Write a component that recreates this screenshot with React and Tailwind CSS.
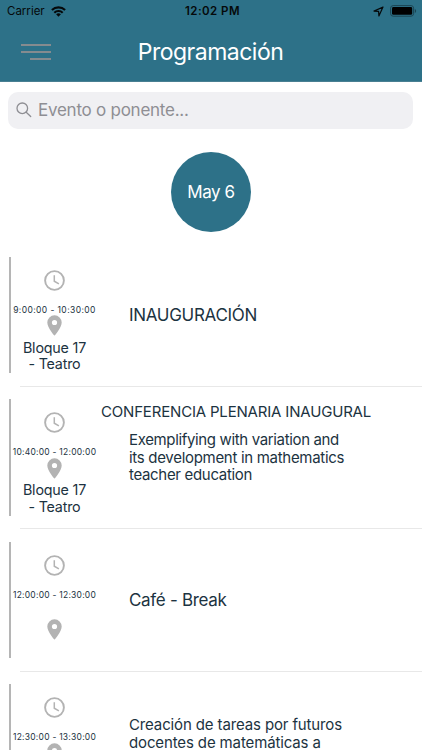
import React from "react";

const events = [
  { time: "9:00:00 - 10:30:00", timeClass: "tracking-[0.4px]", place: ["Bloque 17", "- Teatro"], title: "INAUGURACIÓN" },
  {
    time: "10:40:00 - 12:00:00",
    timeClass: "tracking-[0.24px]",
    place: ["Bloque 17", "- Teatro"],
    heading: "CONFERENCIA PLENARIA INAUGURAL",
    lines: [
      ["Exemplifying with variation and", "tracking-[-0.35px]"],
      ["its development in mathematics", "tracking-[-0.3px]"],
      ["teacher education", "tracking-[-0.32px]"],
    ],
  },
  { time: "12:00:00 - 12:30:00", timeClass: "tracking-[0.24px]", title: "Café - Break" },
  {
    time: "12:30:00 - 13:30:00",
    timeClass: "tracking-[0.24px]",
    alignTop: true,
    lines: [
      ["Creación de tareas por futuros", "tracking-[-0.13px]"],
      ["docentes de matemáticas a", "tracking-[-0.13px]"],
    ],
  },
];

function Clock() {
  return (
    <svg width="21" height="21" viewBox="0 0 21 21" fill="none" stroke="#b3b3b3">
      <circle cx="10.5" cy="10.5" r="9.4" strokeWidth="1.9" />
      <path d="M10.3 5.2v6l4.6 2.7" strokeWidth="1.5" />
    </svg>
  );
}

function Pin() {
  return (
    <svg className="shrink-0" width="15" height="21" viewBox="0 0 15 21" fill="#b3b3b3">
      <path
        fillRule="evenodd"
        d="M7.5.3A7.2 7.2 0 0 0 .3 7.5c0 5.4 7.2 13.2 7.2 13.2s7.2-7.8 7.2-13.2A7.2 7.2 0 0 0 7.5.3Zm0 4.6a2.6 2.6 0 1 1 0 5.2 2.6 2.6 0 0 1 0-5.2Z"
      />
    </svg>
  );
}

function Wifi() {
  return (
    <svg width="15" height="11" viewBox="0 0 15 11" fill="none" stroke="#05090a" strokeWidth="2.1">
      <path d="M.9 4.1a9.4 9.4 0 0 1 13.2 0" />
      <path d="M3.3 6.7a6 6 0 0 1 8.4 0" />
      <path d="M7.5 10.7 5.1 8.3a3.5 3.5 0 0 1 4.8 0Z" fill="#05090a" stroke="none" />
    </svg>
  );
}

function Event({ item }) {
  const justify = item.alignTop ? " justify-start" : " justify-center";
  return (
    <li className="flex h-[142.5px] shrink-0 pl-2 text-[#1c3341]">
      <div className="mt-[13px] flex h-[116.5px] w-[2.5px] shrink-0 justify-end">
        <div className="w-[2px] bg-[#b5b5b5]" />
      </div>
      <div className="flex w-[88px] shrink-0 flex-col items-center">
        <div className="mt-[26px] h-[21px]">
          <Clock />
        </div>
        <div className={"mt-[13.2px] h-3 whitespace-nowrap text-[8.5px] leading-3 " + item.timeClass}>{item.time}</div>
        <div className={"flex h-[57px] flex-col items-center" + justify}>
          <Pin />
          {item.place && (
            <div className="mt-[3.5px] text-center text-[14.3px] leading-[16.5px] tracking-[-0.2px]">
              {item.place.map((l) => (
                <div key={l} className="whitespace-nowrap">{l}</div>
              ))}
            </div>
          )}
        </div>
      </div>
      <div className="flex min-w-0 grow flex-col">
        <div className="h-[41px] pt-4">
          {item.heading && (
            <div className="pl-[2.5px] whitespace-nowrap text-[15px] leading-5 tracking-[-0.18px]">{item.heading}</div>
          )}
        </div>
        <div className={"flex h-[60px] flex-col pl-[30.5px]" + justify + (item.alignTop ? " pt-[4px]" : "")}>
          {item.title && <div className="whitespace-nowrap text-[17px] leading-6 tracking-[-0.3px]">{item.title}</div>}
          {item.lines && (
            <div className={"whitespace-nowrap text-[15px] leading-[17.5px]" + (item.alignTop ? "" : " pt-px")}>
              {item.lines.map(([text, spacing]) => (
                <div key={text} className={spacing}>{text}</div>
              ))}
            </div>
          )}
        </div>
      </div>
    </li>
  );
}

export default function App() {
  return (
    <div className="flex h-[750px] w-[422px] flex-col overflow-hidden bg-white font-['Inter',sans-serif]">
      <header className="flex h-[82px] shrink-0 flex-col border-b border-[#497f92] bg-[#2d7188]">
        <div className="grid h-[22px] grid-cols-3 items-center pr-[5px] pl-[7px] text-[#05090a]">
          <div className="flex items-center gap-[6px] text-[11.5px] leading-4">
            <span>Carrier</span>
            <Wifi />
          </div>
          <div className="pl-px whitespace-nowrap text-center text-[11.5px] leading-4 font-semibold tracking-[0.45px]">12:02 PM</div>
          <div className="flex items-center justify-end gap-[6px]">
            <svg width="11" height="11" viewBox="0 0 11 11" fill="none" stroke="#05090a" strokeWidth="1.2" strokeLinejoin="round">
              <path d="M10 1 1 5.1l4.6.3.3 4.6Z" />
            </svg>
            <svg width="27" height="12" viewBox="0 0 27 12">
              <rect x="0.6" y="0.6" width="23" height="10.6" rx="2.6" fill="none" stroke="#1b4452" />
              <rect x="2" y="2" width="20.2" height="7.8" rx="1.4" fill="#000" />
              <path d="M24.8 4v4c1.8-.6 1.8-3.4 0-4Z" fill="#1b4452" />
            </svg>
          </div>
        </div>
        <div className="grid grow grid-cols-[1fr_auto_1fr] items-center pr-[22px] pl-[21px]">
          <div className="flex w-[30px] flex-col items-end gap-[4.8px] pt-px">
            <div className="h-[2px] w-[30px] bg-[#858b8f]" />
            <div className="h-[2px] w-[30px] bg-[#858b8f]" />
            <div className="h-[2px] w-[21px] bg-[#858b8f]" />
          </div>
          <h1 className="text-[23px] leading-7 tracking-[-0.5px] text-white">Programación</h1>
        </div>
      </header>
      <div className="mx-2 mt-[10px] flex h-[37px] w-[405px] shrink-0 items-center gap-[6px] rounded-[10px] bg-[#f0f0f3] pb-[2px] pl-2 text-[#8e8e93]">
        <svg width="16" height="16" viewBox="0 0 16 16" fill="none" stroke="#8e8e93" strokeWidth="1.3" strokeLinecap="round">
          <circle cx="6.3" cy="6.3" r="5.3" />
          <path d="m10.2 10.2 4.5 4.3" />
        </svg>
        <span className="text-[17px] leading-6 tracking-[-0.25px]">Evento o ponente...</span>
      </div>
      <div className="mt-[22.5px] flex h-20 shrink-0 justify-center">
        <div className="flex size-[80px] items-center justify-center rounded-full bg-[#2d7188] pt-[2px] text-[17px] tracking-[-0.4px] text-white">May 6</div>
      </div>
      <ul className="mt-[12px] flex flex-col">
        {events.map((item, i) => (
          <React.Fragment key={item.time}>
            {i > 0 && <li className="-mt-[0.5px] -mb-[0.5px] ml-5 h-px shrink-0 bg-[#e8e8e8]" />}
            <Event item={item} />
          </React.Fragment>
        ))}
      </ul>
    </div>
  );
}
